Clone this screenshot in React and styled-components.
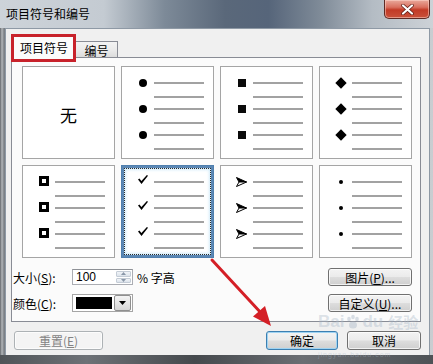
import React from "react";
import styled, { createGlobalStyle } from "styled-components";

const GlobalStyle = createGlobalStyle`
  *, *::before, *::after { box-sizing: border-box; }
  html, body { margin: 0; padding: 0; background: #fff; }
  body { font-family: "Noto Sans CJK SC", "Liberation Sans", sans-serif; }
`;

const Window = styled.div`
  position: relative;
  width: 433px;
  height: 364px;
  display: flex;
  flex-direction: column;
  overflow: hidden;
  background: linear-gradient(90deg, #62666b 0, #b4b7ba 2px, #7b8086 4px, #9aa1a9 50%, #c9cdd1 100%);
  font-family: "Noto Sans CJK SC", "Liberation Sans", sans-serif;
  font-size: 12px;
  color: #000;
`;

const TitleBar = styled.div`
  height: 28px;
  display: flex;
  justify-content: space-between;
  align-items: flex-start;
  background: linear-gradient(90deg, #cdd3d9 0%, #c4cbd2 24%, #7d8a98 38%, #5a687a 52%, #56657a 62%, #7f8b98 74%, #b4bcc4 86%, #cdd2d7 100%);
`;

const Title = styled.div`
  line-height: 28px;
  padding-left: 6px;
  font-size: 12px;
`;

const CloseButton = styled.div`
  width: 46px;
  height: 19px;
  margin-right: 3px;
  display: flex;
  align-items: center;
  justify-content: center;
  border: 1px solid #5e2a24;
  border-top: none;
  border-radius: 0 0 5px 5px;
  background: linear-gradient(180deg, #e9a99c 0%, #d9705f 40%, #c23a26 55%, #c9513a 100%);
  box-shadow: inset 0 0 0 1px rgba(255, 220, 210, 0.5);
`;

const Client = styled.div`
  flex: 1;
  margin: 0 3px 0 5px;
  background: #f0f0f0;
  border: 1px solid #8e99a5;
  border-bottom: none;
  padding: 4px 8px 5px 5px;
  display: flex;
  flex-direction: column;
`;

const BottomEdge = styled.div`
  height: 9px;
  background: linear-gradient(90deg, #505458 0%, #6d7176 20%, #45494d 45%, #6a6e73 70%, #4e5256 100%);
`;

const TabRow = styled.div`
  height: 24px;
  display: flex;
  align-items: flex-end;
  padding-left: 1px;
  position: relative;
  z-index: 1;
`;

const Tab = styled.div`
  position: relative;
  display: flex;
  align-items: center;
  justify-content: center;
  width: ${({ $active }) => ($active ? "64px" : "42px")};
  height: ${({ $active }) => ($active ? "23px" : "16px")};
  margin-bottom: ${({ $active }) => ($active ? "-1px" : "0")};
  padding-top: ${({ $active }) => ($active ? "0" : "1px")};
  border: 1px solid #898c95;
  border-bottom: none;
  border-left: ${({ $active }) => ($active ? "1px solid #898c95" : "none")};
  background: ${({ $active }) =>
    $active ? "#fbfbfb" : "linear-gradient(180deg, #f3f3f3 0%, #ebebeb 50%, #dcdcdc 100%)"};
  font-size: 12px;
`;

const Highlight = styled.div`
  position: absolute;
  top: -2px;
  left: -2px;
  right: -1px;
  bottom: -4px;
  border: 3px solid #c8222b;
  pointer-events: none;
`;

const Panel = styled.div`
  height: 265px;
  border: 1px solid #898c95;
  background: #fbfbfb;
  padding: 8px 8px 9px 1px;
`;

const Grid = styled.div`
  display: grid;
  grid-template-columns: repeat(4, 93px);
  grid-auto-rows: 93px;
  gap: 6px;
  margin-left: 9px;
`;

const Cell = styled.div`
  background: #fff;
  border: 1px solid ${({ $selected }) => ($selected ? "#4f7fae" : "#a5a5a5")};
  padding-top: 15px;
  box-shadow: ${({ $selected }) =>
    $selected ? "inset 0 0 0 2px #5b87b4, inset 0 0 3px 4px #d3ecfa" : "none"};
  outline: ${({ $selected }) => ($selected ? "1px dotted #2a2a2a" : "none")};
  outline-offset: -4px;
`;

const NoneCell = styled(Cell)`
  padding: 4px 0 0;
  display: flex;
  align-items: center;
  justify-content: center;
  font-size: 17px;
`;

const Item = styled.div`
  display: grid;
  grid-template-columns: 32px 50px;
  margin-bottom: 10px;
  &:last-child { margin-bottom: 0; }
`;

const MarkerSlot = styled.div`
  height: 2px;
  padding-left: 9px;
  display: flex;
  align-items: center;
  justify-content: center;
`;

const Lines = styled.div`
  display: flex;
  flex-direction: column;
  gap: 12px;
`;

const Line = styled.div`
  height: 2px;
  background: #a2a2a2;
`;

const Dot = styled.div`
  flex: none;
  width: ${({ $size }) => $size}px;
  height: ${({ $size }) => $size}px;
  border-radius: 50%;
  background: #000;
`;

const Square = styled.div`
  flex: none;
  width: 8px;
  height: 8px;
  background: #0a0a0a;
`;

const Diamond = styled.div`
  flex: none;
  width: 8px;
  height: 8px;
  background: #000;
  transform: rotate(45deg);
`;

const HollowSquare = styled.div`
  flex: none;
  width: 10px;
  height: 10px;
  margin-top: -2px;
  border: 3px solid #000;
  background: #fff;
`;

const Glyph = styled.svg`
  flex: none;
  overflow: visible;
`;

const Options = styled.div`
  display: flex;
  justify-content: space-between;
  margin-top: 10px;
`;

const OptionCol = styled.div`
  display: flex;
  flex-direction: column;
  gap: 8px;
`;

const OptionRow = styled.div`
  display: flex;
  align-items: center;
  height: 18px;
`;

const Label = styled.span`
  width: 59px;
  white-space: nowrap;
`;

const Key = styled.span`
  text-decoration: underline;
`;

const SpinBox = styled.div`
  width: 61px;
  height: 16px;
  display: flex;
  border: 1px solid #abadb3;
  border-top-color: #8e9196;
  background: #fff;
`;

const SpinValue = styled.span`
  flex: 1;
  padding-left: 3px;
  line-height: 14px;
  font-family: "Liberation Sans", sans-serif;
  font-size: 12px;
`;

const SpinButtons = styled.div`
  width: 15px;
  margin: 1px;
  display: flex;
  flex-direction: column;
  gap: 1px;
`;

const SpinHalf = styled.div`
  flex: 1;
  display: flex;
  align-items: center;
  justify-content: center;
  background: linear-gradient(180deg, #f1f4f8, #dce3eb);
  border: 1px solid #c4ccd6;
  border-radius: 1px;
`;

const Unit = styled.span`
  margin-left: 4px;
`;

const ColorCombo = styled.div`
  width: 61px;
  height: 18px;
  display: flex;
  align-items: center;
  border: 1px solid #a5a5a5;
  background: #fff;
  padding: 0 1px 0 3px;
`;

const Swatch = styled.div`
  width: 36px;
  height: 12px;
  background: #000;
`;

const DropButton = styled.div`
  width: 17px;
  height: 16px;
  margin-left: auto;
  display: flex;
  align-items: center;
  justify-content: center;
  border: 1px solid #8f8f8f;
  border-radius: 2px;
  background: linear-gradient(180deg, #f4f4f4 0%, #e6e6e6 50%, #d6d6d6 100%);
`;

const Button = styled.div`
  width: ${({ $w }) => $w}px;
  height: ${({ $h }) => $h || 19}px;
  display: flex;
  align-items: center;
  justify-content: center;
  border: 1px solid ${({ $primary, $disabled }) => ($primary ? "#3c7fb1" : $disabled ? "#adb2b5" : "#707070")};
  border-radius: 3px;
  background: ${({ $disabled }) =>
    $disabled ? "#f4f4f4" : "linear-gradient(180deg, #f3f3f3 0%, #ebebeb 48%, #dddddd 52%, #cfcfcf 100%)"};
  box-shadow: ${({ $primary }) =>
    $primary ? "inset 0 0 0 1px #9fd3f2" : "inset 0 0 0 1px rgba(255, 255, 255, 0.7)"};
  color: ${({ $disabled }) => ($disabled ? "#838383" : "#000")};
  font-size: 12px;
  white-space: nowrap;
`;

const ButtonRow = styled.div`
  display: flex;
  margin-top: 9px;
  height: 19px;
`;

const Spacer = styled.div`
  flex: 1;
`;

const Annotation = styled.svg`
  position: absolute;
  left: 0;
  top: 0;
  pointer-events: none;
`;

const Watermark = styled.div`
  position: absolute;
  left: 318px;
  top: 313px;
  color: rgba(170, 185, 200, 0.4);
  font-family: "Liberation Sans", sans-serif;
  pointer-events: none;
  line-height: 1;
`;

const WatermarkBrand = styled.div`
  display: flex;
  align-items: center;
  gap: 1px;
  font-size: 17px;
  font-weight: bold;
`;

const WatermarkCjk = styled.span`
  margin-left: 4px;
  font-family: "Noto Sans CJK SC", sans-serif;
  font-size: 15px;
`;

const WatermarkUrl = styled.div`
  margin-top: 21px;
  font-size: 7px;
  letter-spacing: 1px;
`;

const Check = () => (
  <Glyph width="10" height="9" viewBox="0 0 10 9" style={{ marginTop: -6 }}>
    <path d="M0 4.6 L1.4 3.6 L3.4 6 L8.9 0 L10 0.8 L3.5 9 Z" fill="#000" />
  </Glyph>
);

const Arrow = () => (
  <Glyph width="11" height="10" viewBox="0 0 11 10">
    <path d="M0.5 0.5 L10.5 5 L3 5 Z" fill="#000" stroke="#000" strokeWidth="1" strokeLinejoin="round" />
    <path d="M3 5 L10.5 5 L0.5 9.5 Z" fill="#fff" stroke="#000" strokeWidth="1" strokeLinejoin="round" />
  </Glyph>
);

const Paw = () => (
  <svg width="16" height="16" viewBox="0 0 16 16">
    <g fill="rgba(170,185,200,0.45)">
      <ellipse cx="4" cy="5" rx="1.8" ry="2.3" />
      <ellipse cx="8" cy="3" rx="1.8" ry="2.3" />
      <ellipse cx="12" cy="5" rx="1.8" ry="2.3" />
      <ellipse cx="8" cy="11" rx="4" ry="3.5" />
    </g>
  </svg>
);

const markers = {
  dot: () => <Dot $size={8} />,
  square: () => <Square />,
  diamond: () => <Diamond />,
  hollow: () => <HollowSquare />,
  check: () => <Check />,
  arrow: () => <Arrow />,
  small: () => <Dot $size={4} />,
};

function BulletCell({ kind, selected }) {
  const Mark = markers[kind];
  return (
    <Cell $selected={selected}>
      {[0, 1, 2].map((i) => (
        <Item key={i}>
          <MarkerSlot>
            <Mark />
          </MarkerSlot>
          <Lines>
            <Line />
            <Line />
          </Lines>
        </Item>
      ))}
    </Cell>
  );
}

export default function App() {
  return (
    <>
      <GlobalStyle />
      <Window>
        <TitleBar>
          <Title>项目符号和编号</Title>
          <CloseButton>
            <svg width="13" height="11" viewBox="0 0 13 11">
              <path d="M2 1.5 L11 9.5 M11 1.5 L2 9.5" stroke="#5a1a12" strokeWidth="3.6" strokeLinecap="round" />
              <path d="M2 1.5 L11 9.5 M11 1.5 L2 9.5" stroke="#fff" strokeWidth="2.2" strokeLinecap="round" />
            </svg>
          </CloseButton>
        </TitleBar>

        <Client>
          <TabRow>
            <Tab $active>
              项目符号
              <Highlight />
            </Tab>
            <Tab>编号</Tab>
          </TabRow>

          <Panel>
            <Grid>
              <NoneCell>无</NoneCell>
              <BulletCell kind="dot" />
              <BulletCell kind="square" />
              <BulletCell kind="diamond" />
              <BulletCell kind="hollow" />
              <BulletCell kind="check" selected />
              <BulletCell kind="arrow" />
              <BulletCell kind="small" />
            </Grid>

            <Options>
              <OptionCol>
                <OptionRow>
                  <Label>
                    大小(<Key>S</Key>):
                  </Label>
                  <SpinBox>
                    <SpinValue>100</SpinValue>
                    <SpinButtons>
                      <SpinHalf>
                        <svg width="5" height="3" viewBox="0 0 5 3">
                          <path d="M0 3 L2.5 0 L5 3 Z" fill="#8a97a8" />
                        </svg>
                      </SpinHalf>
                      <SpinHalf>
                        <svg width="5" height="3" viewBox="0 0 5 3">
                          <path d="M0 0 L2.5 3 L5 0 Z" fill="#8a97a8" />
                        </svg>
                      </SpinHalf>
                    </SpinButtons>
                  </SpinBox>
                  <Unit>% 字高</Unit>
                </OptionRow>
                <OptionRow>
                  <Label>
                    颜色(<Key>C</Key>):
                  </Label>
                  <ColorCombo>
                    <Swatch />
                    <DropButton>
                      <svg width="7" height="4" viewBox="0 0 7 4">
                        <path d="M0 0 L7 0 L3.5 4 Z" fill="#000" />
                      </svg>
                    </DropButton>
                  </ColorCombo>
                </OptionRow>
              </OptionCol>

              <OptionCol>
                <Button $w={84} $h={18}>
                  图片(<Key>P</Key>)...
                </Button>
                <Button $w={84} $h={18}>
                  自定义(<Key>U</Key>)...
                </Button>
              </OptionCol>
            </Options>
          </Panel>

          <ButtonRow>
            <Button $w={89} $disabled style={{ marginLeft: 3 }}>
              重置(<Key>E</Key>)
            </Button>
            <Spacer />
            <Button $w={72} $primary>
              确定
            </Button>
            <Button $w={74} style={{ marginLeft: 9 }}>
              取消
            </Button>
          </ButtonRow>
        </Client>

        <BottomEdge />

        <Watermark>
          <WatermarkBrand>
            Bai
            <Paw />
            du
            <WatermarkCjk>经验</WatermarkCjk>
          </WatermarkBrand>
          <WatermarkUrl>jingyan.baidu.com</WatermarkUrl>
        </Watermark>

        <Annotation width="433" height="364" viewBox="0 0 433 364">
          <line x1="212" y1="260" x2="262" y2="314" stroke="#d41f26" strokeWidth="3" strokeLinecap="round" />
          <polygon points="271,326 253,316.5 265,306" fill="#d41f26" />
        </Annotation>
      </Window>
    </>
  );
}
